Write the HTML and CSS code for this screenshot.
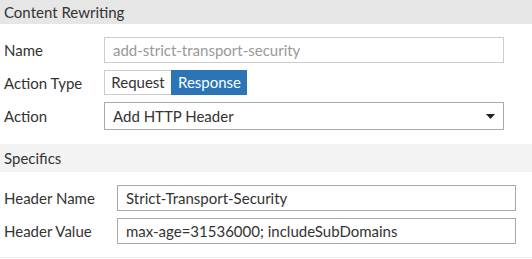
FILE: index.html
```html
<!DOCTYPE html>
<html lang="en">
<head>
    <title>Content Rewriting</title>
    <meta content="width=device-width, initial-scale=1" name="viewport" />
    <link rel="stylesheet" href="styles.css">
</head>
<body>
    <main>
        <div class="section-title">Content Rewriting</div>
        <div class="form-body">
            <div class="form-row">
                <label>Name</label>
                <div class="text-field placeholder">add-strict-transport-security</div>
            </div>
            <div class="form-row">
                <label>Action Type</label>
                <div class="toggle">
                    <span class="toggle-btn">Request</span>
                    <span class="toggle-btn active">Response</span>
                </div>
            </div>
            <div class="form-row">
                <label>Action</label>
                <div class="text-field select">
                    <span>Add HTTP Header</span>
                    <svg width="9" height="5" viewBox="0 0 9 5"><path d="M0 0 H9 L4.5 5 Z" fill="#222"/></svg>
                </div>
            </div>
        </div>
        <div class="section-title sub">Specifics</div>
        <div class="form-body specifics">
            <div class="form-row">
                <label>Header Name</label>
                <div class="text-field">Strict-Transport-Security</div>
            </div>
            <div class="form-row">
                <label>Header Value</label>
                <div class="text-field">max-age=31536000; includeSubDomains</div>
            </div>
        </div>
    </main>
</body>
</html>
```

FILE: styles.css
```css
body {
    margin: 0;
    width: 532px;
    font-family: Lato, 'Liberation Sans', sans-serif;
    font-size: 15px;
    color: #333;
    background: #fff;
}
.section-title {
    height: 24px;
    line-height: 24px;
    padding-left: 4px;
    background: #e6e6e6;
}
.section-title.sub {
    height: 28px;
    line-height: 28px;
    background: #f3f3f3;
    margin-top: 14px;
}
.form-body {
    display: flex;
    flex-direction: column;
    gap: 7px;
    padding-top: 13px;
}
.form-body.specifics {
    padding-top: 13px;
    padding-bottom: 13px;
    border-bottom: 1px solid #ebebeb;
}
.form-row {
    display: flex;
    align-items: center;
}
.form-row label {
    width: 104px;
    padding-left: 4px;
    box-sizing: border-box;
}
.specifics .form-row label {
    width: 117px;
}
.text-field {
    box-sizing: border-box;
    width: 400px;
    height: 26px;
    line-height: 24px;
    padding: 0 8px;
    border: 1px solid #aaa;
}
.specifics .text-field {
    width: 399px;
}
.text-field.placeholder {
    color: #999;
    border-color: #ccc;
}
.text-field.select {
    height: 28px;
    line-height: 26px;
    padding-right: 8px;
    display: flex;
    justify-content: space-between;
    align-items: center;
}
.toggle {
    display: flex;
    height: 25px;
}
.toggle-btn {
    box-sizing: border-box;
    width: 67px;
    height: 25px;
    line-height: 23px;
    text-align: center;
    border: 1px solid #ccc;
    border-right: none;
}
.toggle-btn.active {
    width: 76px;
    background: #2b75b6;
    border-color: #2b75b6;
    color: #fff;
}
```
